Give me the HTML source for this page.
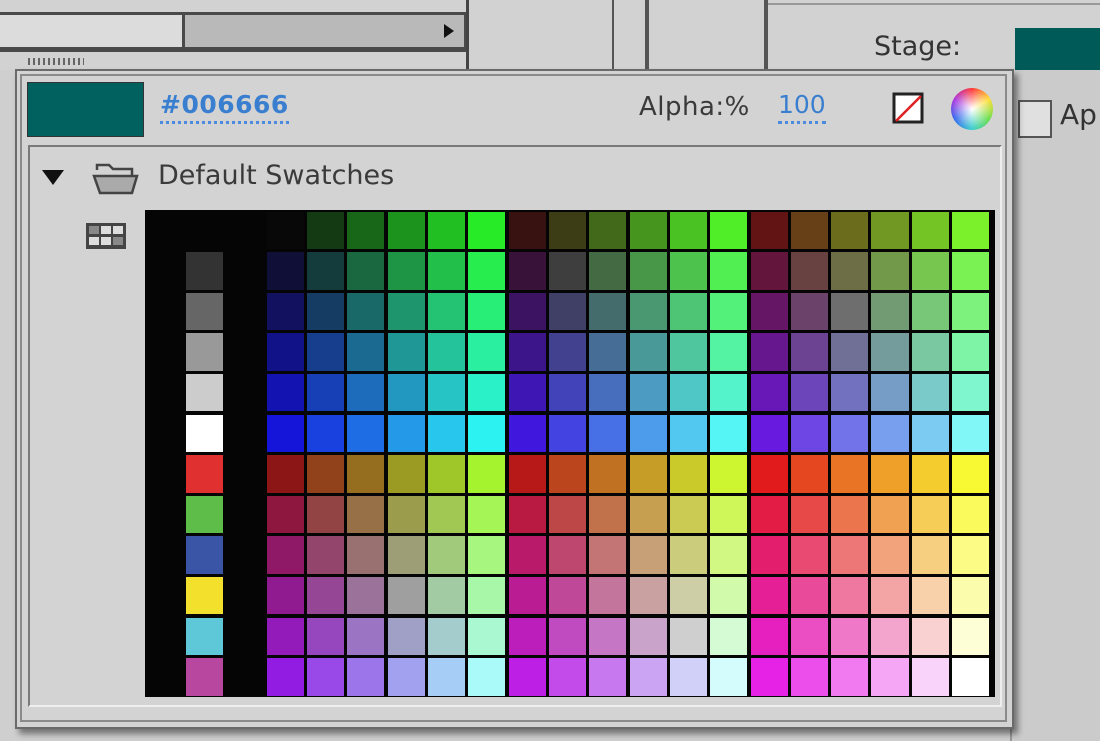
<!DOCTYPE html>
<html><head><meta charset="utf-8"><style>
body{margin:0;width:1100px;height:741px;background:#cfcfcf;position:relative;overflow:hidden;font-family:"DejaVu Sans","Liberation Sans",sans-serif}
.a{position:absolute}
#grid{position:absolute;left:145px;top:210px;width:850px;height:487px;background:#050505}
#grid div{position:absolute}
</style></head><body>
<div class="a" style="left:0;top:0;width:1100px;height:70px;background:#d2d2d2"></div>
<div class="a" style="left:0;top:12px;width:468px;height:40px;background:#4a4a4a"></div>
<div class="a" style="left:0;top:15px;width:182px;height:32px;background:#dcdcdc"></div>
<div class="a" style="left:185px;top:15px;width:279px;height:32px;background:#b9b9b9"></div>
<div class="a" style="left:444px;top:24px;width:0;height:0;border-top:7px solid transparent;border-bottom:7px solid transparent;border-left:10px solid #111"></div>
<div class="a" style="left:466px;top:0;width:3px;height:70px;background:#444"></div>
<div class="a" style="left:28px;top:58px;width:56px;height:7px;background:repeating-linear-gradient(90deg,#666 0 2px,transparent 2px 5px)"></div>
<div class="a" style="left:612px;top:0;width:2px;height:70px;background:#555"></div>
<div class="a" style="left:645px;top:0;width:4px;height:70px;background:#555"></div>
<div class="a" style="left:764px;top:0;width:4px;height:70px;background:#555"></div>
<div class="a" style="left:768px;top:3px;width:332px;height:2px;background:#999"></div>
<div class="a" style="left:874px;top:31px;font-size:27px;color:#333">Stage:</div>
<div class="a" style="left:1015px;top:28px;width:85px;height:42px;background:#005a58"></div>
<div class="a" style="left:1010px;top:70px;width:90px;height:671px;background:#cbcbcb;border-left:2px solid #999"></div>
<div class="a" style="left:1018px;top:100px;width:30px;height:34px;border:2px solid #555;background:#e0e0e0"></div>
<div class="a" style="left:1060px;top:98px;font-size:28px;color:#333">Ap</div>
<div class="a" style="left:15px;top:69px;width:995px;height:656px;background:#d3d3d3;border:2px solid #6a6a6a;box-shadow:4px 5px 6px rgba(0,0,0,.45)"></div>
<div class="a" style="left:20px;top:74px;width:983px;height:644px;border:2px solid #8a8a8a"></div>
<div class="a" style="left:27px;top:82px;width:115px;height:53px;background:#00615f;border:1px solid #333"></div>
<div class="a" style="left:160px;top:90px;font-size:25px;color:#3a7fcf;font-weight:bold;letter-spacing:0.5px;border-bottom:3px dotted #4a8be0;padding-bottom:2px">#006666</div>
<div class="a" style="left:639px;top:92px;font-size:26px;color:#3a3a3a;letter-spacing:0.5px">Alpha:%</div>
<div class="a" style="left:778px;top:90px;font-size:25px;color:#3a7fcf;border-bottom:3px dotted #4a8be0;padding-bottom:2px">100</div>
<svg class="a" style="left:892px;top:92px" width="34" height="34"><rect x="2" y="2" width="28" height="28" fill="#fff" stroke="#222" stroke-width="3"/><line x1="4" y1="29" x2="29" y2="4" stroke="#e02020" stroke-width="2.5"/></svg>
<div class="a" style="left:951px;top:88px;width:42px;height:42px;border-radius:50%;background:radial-gradient(circle,#fff 0,rgba(255,255,255,0) 70%),conic-gradient(#f33,#fd3,#6d4,#3cc,#36e,#a3d,#f33)"></div>
<div class="a" style="left:28px;top:145px;width:970px;height:558px;border:2px solid #7a7a7a;border-right-color:#eee;border-bottom-color:#eee"></div>
<div class="a" style="left:42px;top:170px;width:0;height:0;border-left:11px solid transparent;border-right:11px solid transparent;border-top:15px solid #111"></div>
<svg class="a" style="left:92px;top:160px" width="48" height="36"><path d="M5 10 L5 5 L17 5 L21 9 L40 9 L40 15" fill="none" stroke="#444" stroke-width="2.5"/><path d="M2 16 L45 16 L40 33 L8 33 Z" fill="#aaa" stroke="#444" stroke-width="2.5"/></svg>
<div class="a" style="left:158px;top:160px;font-size:27px;color:#3a3a3a">Default Swatches</div>
<svg class="a" style="left:86px;top:223px" width="40" height="26"><rect width="40" height="26" fill="#444"/><rect x="3" y="3" width="10" height="8" fill="#888"/><rect x="15" y="3" width="10" height="8" fill="#ddd"/><rect x="27" y="3" width="10" height="8" fill="#ddd"/><rect x="3" y="14" width="10" height="8" fill="#ddd"/><rect x="15" y="14" width="10" height="8" fill="#ddd"/><rect x="27" y="14" width="10" height="8" fill="#888"/></svg>
<div id="grid"></div>
<script>
var g=document.getElementById('grid'),v=[0,.2,.4,.6,.8,1];
function col(r,gr,b){var L=0.3*r+0.55*gr+0.15*b,k=0.18;var o=[r,gr,b].map(function(x){x=x*(1-k)+L*k;return Math.min(255,Math.round(14+x*241));});if(r==0&&gr==0&&b==0)o=[8,8,8];return 'rgb('+o.join(',')+')';}
var pw=40.33,ph=40.6,h='';
function cell(c,r,color){h+='<div style="left:'+(120+(c-3)*pw+1.5).toFixed(1)+'px;top:'+(r*ph+1.5).toFixed(1)+'px;width:'+(pw-3).toFixed(1)+'px;height:'+(ph-3).toFixed(1)+'px;background:'+color+'"></div>';}
for(var r=0;r<12;r++){for(var c=0;c<18;c++){var R=r<6?v[Math.floor(c/6)]:v[3+Math.floor(c/6)],G=v[c%6],B=v[r%6];cell(c+3,r,col(R,G,B));}}
var sideC=['#050505','#333','#666','#999','#ccc','#fff','#e03030','#5dbd48','#3a55a5','#f2e02c','#5ec8d8','#b8489f'];
for(var r=1;r<12;r++){h+='<div style="left:41px;top:'+(r*ph+1.5).toFixed(1)+'px;width:37px;height:'+(ph-3).toFixed(1)+'px;background:'+sideC[r]+'"></div>';}
g.innerHTML=h;
</script>
</body></html>
